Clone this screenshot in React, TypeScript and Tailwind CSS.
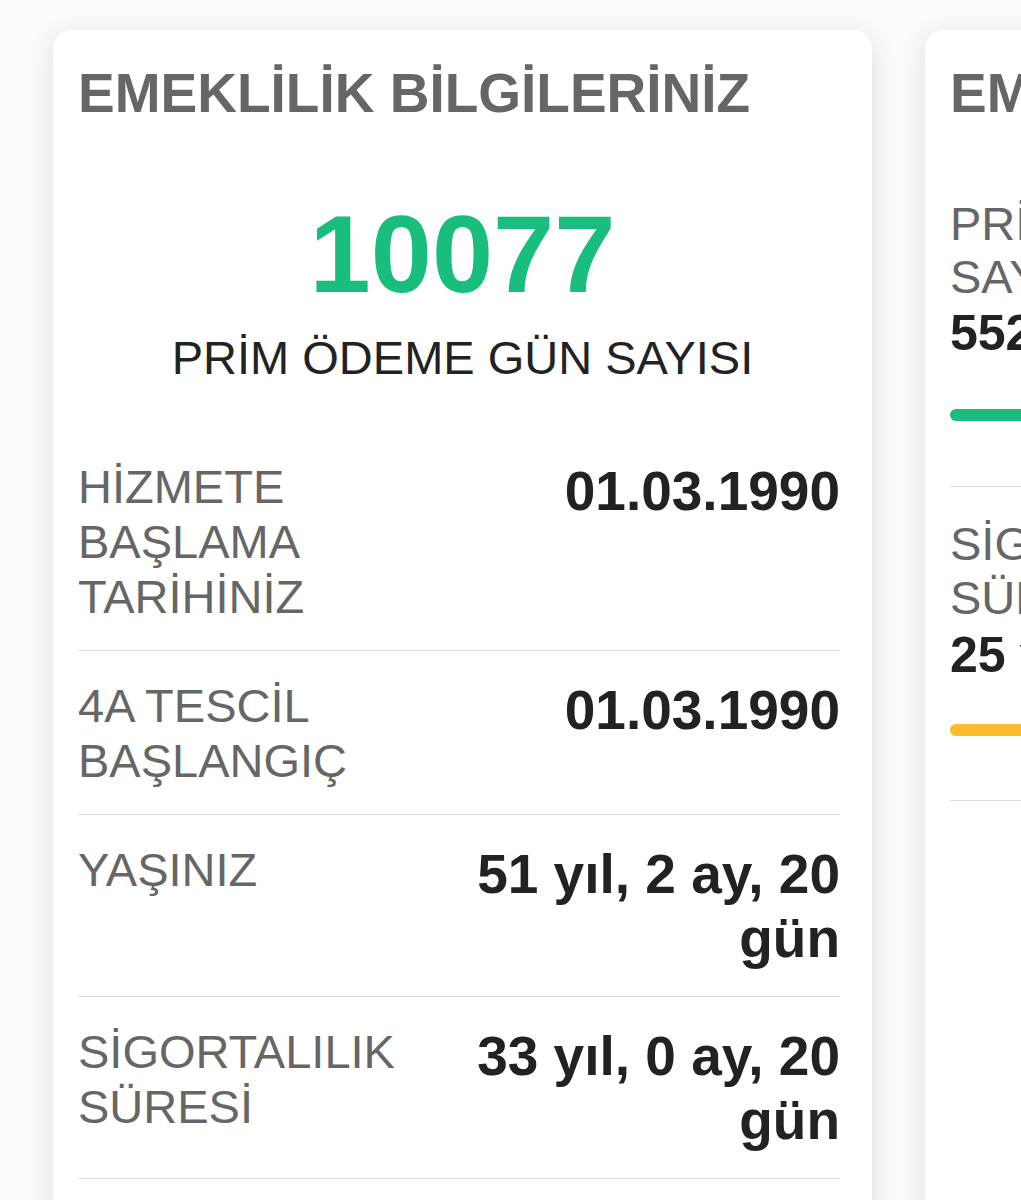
import * as React from 'react';

type Row = { label: string; value: string };

const rows: Row[] = [
  { label: 'HİZMETE BAŞLAMA TARİHİNİZ', value: '01.03.1990' },
  { label: '4A TESCİL BAŞLANGIÇ', value: '01.03.1990' },
  { label: 'YAŞINIZ', value: '51 yıl, 2 ay, 20 gün' },
  { label: 'SİGORTALILIK SÜRESİ', value: '33 yıl, 0 ay, 20 gün' },
];

const cardClass =
  'w-[819px] shrink-0 rounded-[18px] bg-white px-[25px] pt-[32px] pb-[60px] shadow-[0_6px_24px_rgba(60,64,90,0.17)]';

function CardTitle() {
  return (
    <h2 className="text-[55px] font-bold leading-[1.15] text-[#666666]">
      EMEKLİLİK BİLGİLERİNİZ
    </h2>
  );
}

function InfoCard() {
  return (
    <div className={cardClass}>
      <CardTitle />
      <div className="mt-[74px] text-center">
        <div className="text-[110px] font-bold leading-none text-[#19bd7d]">10077</div>
        <div className="mt-[22px] text-[47px] leading-[1.13] text-[#222222]">
          PRİM ÖDEME GÜN SAYISI
        </div>
      </div>
      <div className="mt-[48px] mr-[7px]">
        {rows.map((row) => (
          <div
            key={row.label}
            className="grid grid-cols-2 items-start border-b border-[#dcdcdf] pt-[27px] pb-[26px]"
          >
            <div className="text-[47px] leading-[55px] text-[#666666]">{row.label}</div>
            <div className="text-right text-[55px] font-bold leading-[64px] text-[#222222]">
              {row.value}
            </div>
          </div>
        ))}
      </div>
    </div>
  );
}

function ProgressCard() {
  return (
    <div className={cardClass}>
      <CardTitle />
      <div className="mt-[72px] border-b border-[#dcdcdf] pb-[65px]">
        <div className="w-[360px] text-[47px] leading-[53px] text-[#666666]">PRİM GÜN SAYISI</div>
        <div className="text-[50px] font-bold leading-[60px] text-[#222222]">5520 / 7200</div>
        <div className="mt-[46px] h-[12px] w-[560px] rounded-full bg-[#19bd7d]" />
      </div>
      <div className="border-b border-[#dcdcdf] pt-[30px] pb-[64px]">
        <div className="w-[360px] text-[47px] leading-[54px] text-[#666666]">SİGORTALILIK SÜRESİ</div>
        <div className="text-[50px] font-bold leading-[60px] text-[#222222]">25 yıl / 33 yıl</div>
        <div className="mt-[39px] h-[12px] w-[600px] rounded-full bg-[#fcba2c]" />
      </div>
    </div>
  );
}

export default function App() {
  return (
    <div className="min-h-screen w-full overflow-hidden bg-[#fbfbfc] font-['Liberation_Sans',Arial,sans-serif]">
      <div className="flex gap-[53px] pl-[53px] pt-[30px]">
        <InfoCard />
        <ProgressCard />
      </div>
    </div>
  );
}
